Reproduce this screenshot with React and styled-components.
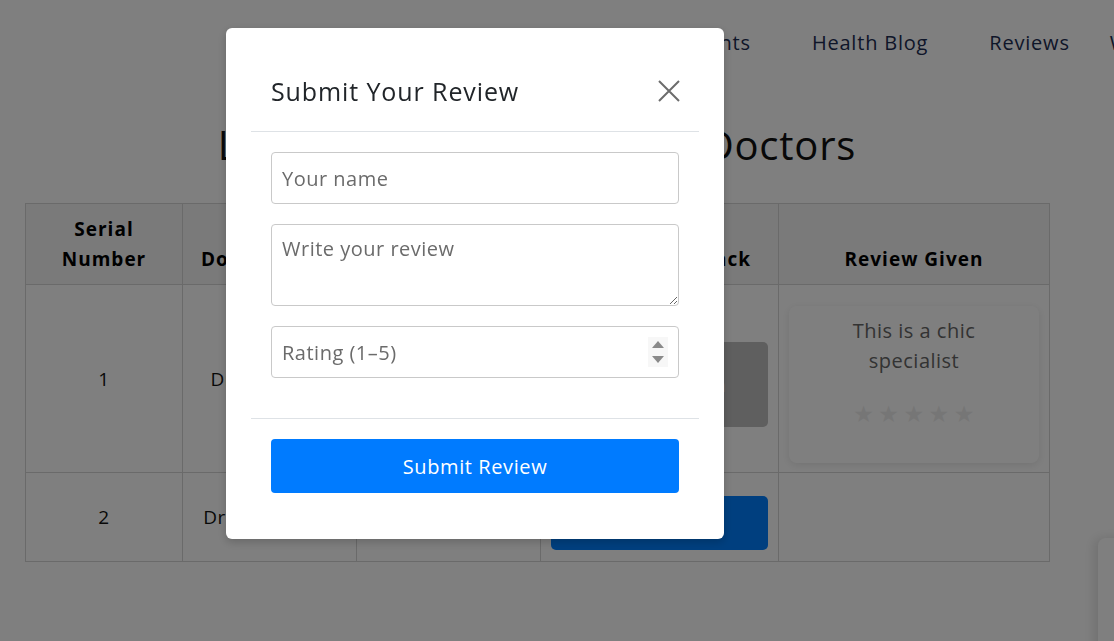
import React from 'react'
import styled, { createGlobalStyle } from 'styled-components'

const GlobalStyle = createGlobalStyle`
  html, body {
    margin: 0;
    padding: 0;
    background: #ffffff;
    overflow: hidden;
  }
  body {
    font-family: "Open Sans", "Liberation Sans", sans-serif;
    color: #222;
  }
  * { box-sizing: border-box; }
`

const Page = styled.div`
  width: 1114px;
  height: 641px;
`

const Nav = styled.nav`
  display: flex;
  gap: 61px;
  padding: 30px 0 0 609px;
  white-space: nowrap;
`

const NavLink = styled.a`
  font-size: 20px;
  letter-spacing: 0.8px;
  line-height: 26px;
  color: #1c2d52;
  text-decoration: none;
  margin-left: ${p => (p.$tight ? '-21px' : '0')};
`

const Heading = styled.h1`
  margin: 0;
  width: 1024px;
  margin-left: 25px;
  margin-top: 59px;
  text-align: center;
  font-size: 40px;
  letter-spacing: 0.8px;
  line-height: 60px;
  font-weight: 400;
  color: #111;
`

const Table = styled.table`
  margin: 28px 0 0 25px;
  width: 1024px;
  border-collapse: collapse;
  table-layout: fixed;
`

const Th = styled.th`
  background: #f4f4f4;
  border: 1px solid #d4d4d4;
  height: 81px;
  font-size: 19px;
  letter-spacing: 1px;
  line-height: 30px;
  font-weight: 700;
  color: #000;
  padding: 0 12px 10px;
  text-align: center;
  vertical-align: bottom;
`

const Td = styled.td`
  border: 1px solid #d4d4d4;
  height: ${p => p.$h}px;
  font-size: 19px;
  letter-spacing: 0.5px;
  line-height: 30px;
  color: #111;
  text-align: center;
  vertical-align: ${p => (p.$top ? 'top' : 'middle')};
  padding: 0 10px;
`

const ActionButton = styled.button`
  display: block;
  width: 217px;
  height: ${p => p.$h}px;
  margin-top: ${p => p.$offset}px;
  border: none;
  border-radius: 5px;
  background: ${p => (p.$muted ? '#bebebe' : '#007fff')};
  color: #fff;
  font-family: inherit;
  font-size: 18px;
`

const ReviewCard = styled.div`
  margin: 21px 0 0;
  height: 157px;
  border-radius: 8px;
  background: #fff;
  box-shadow: 0 2px 8px rgba(0, 0, 0, 0.1);
  padding: 10px 25px 0;
  display: flex;
  flex-direction: column;
  align-items: center;
`

const ReviewText = styled.p`
  margin: 0;
  font-size: 20px;
  letter-spacing: 0.5px;
  line-height: 30px;
  color: #666;
`

const Stars = styled.div`
  margin-top: 26px;
  display: flex;
  gap: 4px;
  color: #ececec;
  font-size: 23px;
  line-height: 24px;
  font-family: "DejaVu Sans", sans-serif;
`

const ChatWidget = styled.div`
  position: fixed;
  left: 1098px;
  top: 538px;
  width: 220px;
  height: 200px;
  background: #fff;
  border-radius: 8px;
  box-shadow: -4px 0 12px rgba(0, 0, 0, 0.12);
`

const Backdrop = styled.div`
  position: fixed;
  inset: 0;
  background: rgba(0, 0, 0, 0.5);
`

const Dialog = styled.div`
  position: fixed;
  left: 226px;
  top: 28px;
  width: 498px;
  background: #fff;
  border-radius: 6px;
  padding: 25px;
  box-shadow: 0 3px 10px rgba(0, 0, 0, 0.2);
`

const DialogHeader = styled.div`
  display: flex;
  align-items: center;
  justify-content: space-between;
  padding: 20px 19px 22px 20px;
  border-bottom: 1px solid #dee2e6;
`

const Title = styled.h2`
  margin: 0;
  font-size: 25px;
  letter-spacing: 0.9px;
  line-height: 36px;
  font-weight: 500;
  color: #212529;
`

const CloseButton = styled.button`
  display: flex;
  padding: 0;
  border: none;
  background: none;
  cursor: pointer;
`

const DialogBody = styled.div`
  padding: 20px 20px 40px;
  display: flex;
  flex-direction: column;
  gap: 20px;
`

const fieldText = `
  font-family: inherit;
  font-size: 20px;
  letter-spacing: 0.5px;
  color: #333;
  &::placeholder { color: #6b6b6b; }
`

const Field = styled.input`
  height: 52px;
  width: 100%;
  border: 1px solid #c9c9c9;
  border-radius: 4px;
  padding: 0 10px;
  ${fieldText}
`

const Area = styled.textarea`
  height: 82px;
  width: 100%;
  border: 1px solid #c9c9c9;
  border-radius: 4px;
  padding: 10px 10px;
  line-height: 27px;
  display: block;
  ${fieldText}
`

const NumberBox = styled.div`
  height: 52px;
  display: flex;
  align-items: center;
  border: 1px solid #c9c9c9;
  border-radius: 4px;
  padding: 0 10px;
`

const NumberInput = styled.input`
  flex: 1;
  border: none;
  outline: none;
  padding: 0;
  ${fieldText}
`

const DialogFooter = styled.div`
  border-top: 1px solid #dee2e6;
  padding: 20px 20px 21px;
`

const SubmitButton = styled.button`
  width: 100%;
  height: 54px;
  border: none;
  border-radius: 4px;
  background: #007bff;
  color: #fff;
  font-family: inherit;
  font-size: 20px;
  letter-spacing: 0.6px;
  font-weight: 500;
`

function Spinner() {
  return (
    <svg width="20" height="30" viewBox="0 0 20 30">
      <rect x="0" y="0" width="20" height="30" fill="#f7f7f7" />
      <path d="M4 11 L10 4 L16 11 Z" fill="#8a8a8a" />
      <path d="M4 19 L10 26 L16 19 Z" fill="#8a8a8a" />
    </svg>
  )
}

function CloseIcon() {
  return (
    <svg width="22" height="22" viewBox="0 0 22 22">
      <path d="M1 1 L21 21 M21 1 L1 21" stroke="#6c6c6c" strokeWidth="2" />
    </svg>
  )
}

export default function App() {
  return (
    <Page>
      <GlobalStyle />
      <Nav>
        <NavLink>Appointments</NavLink>
        <NavLink>Health Blog</NavLink>
        <NavLink>Reviews</NavLink>
        <NavLink $tight>Wellness</NavLink>
      </Nav>
      <Heading>Leave Feedback for Your Doctors</Heading>
      <Table>
        <colgroup>
          <col style={{ width: 157 }} />
          <col style={{ width: 174 }} />
          <col style={{ width: 184 }} />
          <col style={{ width: 238 }} />
          <col style={{ width: 271 }} />
        </colgroup>
        <thead>
          <tr>
            <Th>Serial Number</Th>
            <Th>Doctor Name</Th>
            <Th>Speciality</Th>
            <Th>Provide Feedback</Th>
            <Th>Review Given</Th>
          </tr>
        </thead>
        <tbody>
          <tr>
            <Td $h={188}>1</Td>
            <Td $h={188}>Dr. John Doe</Td>
            <Td $h={188}>Cardiology</Td>
            <Td $h={188}>
              <ActionButton $muted $h={85} $offset={12}>Feedback Given</ActionButton>
            </Td>
            <Td $h={188} $top>
              <ReviewCard>
                <ReviewText>This is a chic specialist</ReviewText>
                <Stars>
                  <span>★</span><span>★</span><span>★</span><span>★</span><span>★</span>
                </Stars>
              </ReviewCard>
            </Td>
          </tr>
          <tr>
            <Td $h={89}>2</Td>
            <Td $h={89}>Dr. Jane Smith</Td>
            <Td $h={89}>Dermatology</Td>
            <Td $h={89}>
              <ActionButton $h={54} $offset={12}>Click Here</ActionButton>
            </Td>
            <Td $h={89}></Td>
          </tr>
        </tbody>
      </Table>
      <ChatWidget />
      <Backdrop />
      <Dialog>
        <DialogHeader>
          <Title>Submit Your Review</Title>
          <CloseButton aria-label="Close"><CloseIcon /></CloseButton>
        </DialogHeader>
        <DialogBody>
          <Field placeholder="Your name" />
          <Area placeholder="Write your review" />
          <NumberBox>
            <NumberInput placeholder="Rating (1–5)" />
            <Spinner />
          </NumberBox>
        </DialogBody>
        <DialogFooter>
          <SubmitButton>Submit Review</SubmitButton>
        </DialogFooter>
      </Dialog>
    </Page>
  )
}
